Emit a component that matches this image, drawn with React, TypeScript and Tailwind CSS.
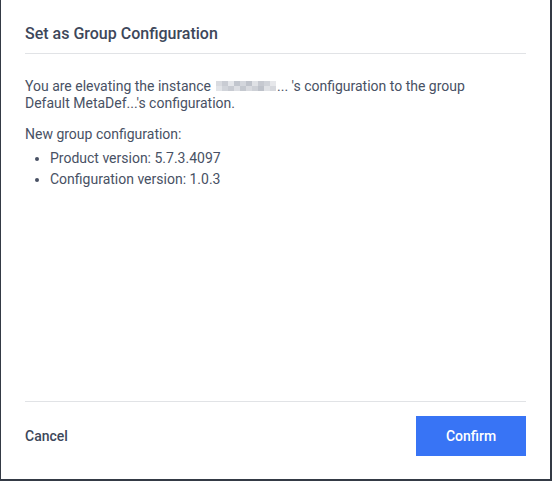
import React from "react";

const blocksTop = ["#d9dbe0", "#c9ccd3", "#e4e6ea", "#c2c6ce", "#d3d6dc", "#bfc3cb", "#dfe1e5", "#c6c9d0", "#d0d3d9", "#e6e7ea"];
const blocksBot = ["#e2e4e8", "#d1d4da", "#c8cbd2", "#dcdee3", "#c4c8cf", "#d8dadf", "#cdd0d6", "#bec2ca", "#e0e2e6", "#d6d8dd"];

function Blurred() {
  return (
    <span className="inline-flex flex-col align-middle ml-[5px] mr-px -mt-[2px]">
      <span className="flex">
        {blocksTop.map((c, i) => (
          <span key={i} className="w-[6px] h-[5px]" style={{ backgroundColor: c }} />
        ))}
      </span>
      <span className="flex">
        {blocksBot.map((c, i) => (
          <span key={i} className="w-[6px] h-[5px]" style={{ backgroundColor: c }} />
        ))}
      </span>
    </span>
  );
}

export default function App() {
  return (
    <div
      className="w-[552px] h-[481px] bg-[#343a45] flex"
      style={{ fontFamily: "Roboto, 'Liberation Sans', sans-serif" }}
    >
      <div className="flex-1 flex flex-col bg-white ml-px mr-[2px] mb-[2px] px-6">
        <div className="pt-6 pb-[9px] border-b border-[#e1e3e6]">
          <h1 className="text-[16px] leading-[20px] font-medium text-[#3d475a]">
            Set as Group Configuration
          </h1>
        </div>
        <div className="pt-[24px] text-[14px] leading-[17px] text-[#485164]">
          <p>
            You are elevating the instance<Blurred />... 's configuration to the group
            <br />
            Default MetaDef...'s configuration.
          </p>
          <p className="mt-[14px]">New group configuration:</p>
          <ul className="mt-[7px] flex flex-col gap-1">
            <li className="flex items-center">
              <span className="w-[4px] h-[4px] rounded-full bg-[#485164] ml-[10px] mr-[11px]" />
              Product version: 5.7.3.4097
            </li>
            <li className="flex items-center">
              <span className="w-[4px] h-[4px] rounded-full bg-[#485164] ml-[10px] mr-[11px]" />
              Configuration version: 1.0.3
            </li>
          </ul>
        </div>
        <div className="mt-auto border-t border-[#e1e3e6] pt-[14px] pb-[23px] flex items-center justify-between">
          <button className="text-[14px] font-medium text-[#3d475a] leading-[17px]">Cancel</button>
          <button className="w-[110px] h-10 bg-[#3874f5] text-white text-[14px] font-medium">
            Confirm
          </button>
        </div>
      </div>
    </div>
  );
}
